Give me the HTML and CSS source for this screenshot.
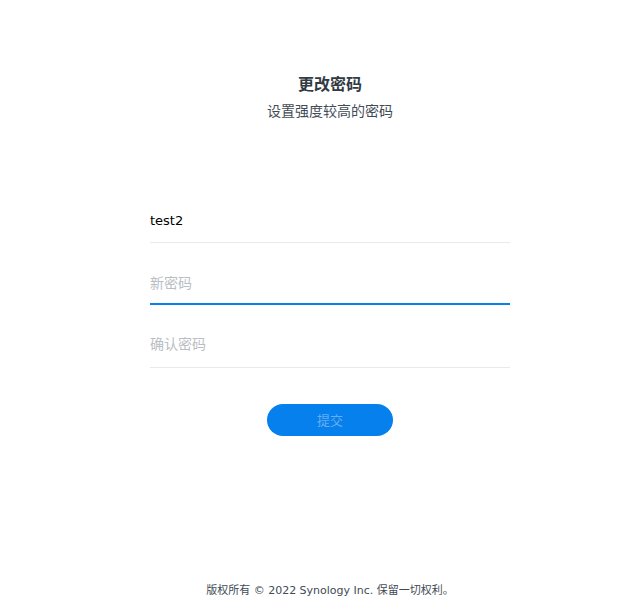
FILE: index.html
```html
<!DOCTYPE html>
<html lang="zh-CN">
<head>
<meta charset="utf-8">
<title>更改密码</title>
<link rel="stylesheet" href="styles.css">
</head>
<body>
<div class="page">
  <div class="header">
    <div class="title">更改密码</div>
    <div class="subtitle">设置强度较高的密码</div>
  </div>
  <form class="form">
    <input class="field first" type="text" value="test2">
    <input class="field focused" type="password" placeholder="新密码">
    <input class="field third" type="password" placeholder="确认密码">
    <button class="submit" type="button">提交</button>
  </form>
  <div class="footer">版权所有 © 2022 Synology Inc. 保留一切权利。</div>
</div>
</body>
</html>
```

FILE: styles.css
```css
html, body {
  margin: 0;
  padding: 0;
  background: #ffffff;
}
body {
  font-family: "DejaVu Sans", "Noto Sans CJK SC", sans-serif;
  color: #414b55;
}
.page {
  height: 616px;
  box-sizing: border-box;
  padding-left: 26px;
  display: flex;
  flex-direction: column;
  align-items: center;
}
.header {
  margin-top: 74px;
  text-align: center;
}
.title {
  font-size: 16px;
  font-weight: bold;
  line-height: 21px;
  color: #323a43;
}
.subtitle {
  margin-top: 6px;
  font-size: 14px;
  line-height: 20px;
  color: #414b55;
}
.form {
  margin: 81px 0 0;
  width: 360px;
  display: flex;
  flex-direction: column;
  align-items: center;
}
.field {
  display: block;
  width: 360px;
  height: 41px;
  box-sizing: border-box;
  margin: 0;
  padding: 0 0 3px 0;
  border: none;
  border-bottom: 1px solid #e7e9eb;
  outline: none;
  background: transparent;
  font-family: "DejaVu Sans", "Noto Sans CJK SC", sans-serif;
  font-size: 13px;
  color: #000000;
}
.field::placeholder {
  color: #b9bec4;
  font-family: "Noto Sans CJK SC", sans-serif;
  font-size: 14px;
}
.focused {
  margin-top: 21px;
  border-bottom: 2px solid #0a80ec;
  padding-bottom: 1px;
}
.third {
  margin-top: 22px;
  padding-bottom: 5px;
}
.submit {
  margin-top: 36px;
  width: 126px;
  height: 32px;
  border: none;
  border-radius: 16px;
  background: #0580ec;
  color: #66aef0;
  font-family: "Noto Sans CJK SC", sans-serif;
  font-size: 13px;
  padding: 0 0 1px 0;
}
.footer {
  margin-top: auto;
  margin-bottom: 17px;
  font-size: 11px;
  line-height: 16px;
  color: #414b55;
}
```
